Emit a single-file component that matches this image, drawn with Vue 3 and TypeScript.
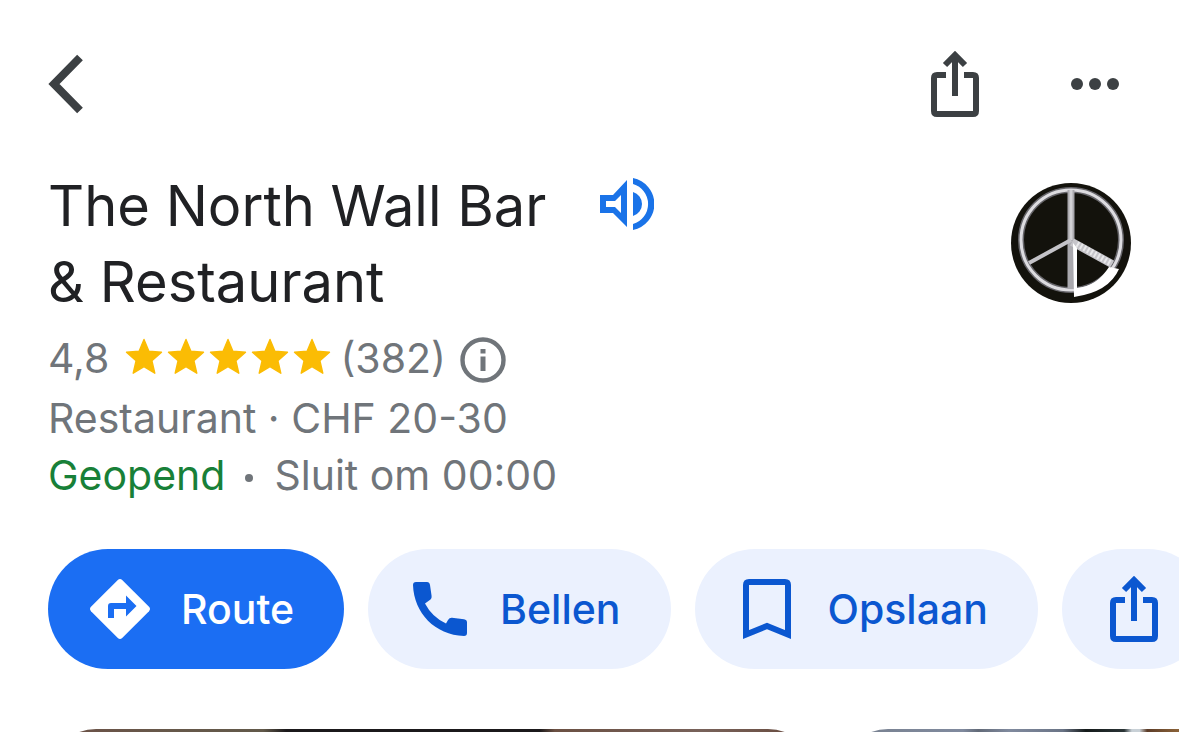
<script setup lang="ts">
const place = {
  nameLines: ['The North Wall Bar', '& Restaurant'],
  rating: '4,8',
  stars: 5,
  reviews: '(382)',
  category: 'Restaurant · CHF 20-30',
  status: 'Geopend',
  closing: 'Sluit om 00:00',
}

const photos: string[] = ['interior', 'terrace']
</script>

<template>
  <main class="place">
    <header class="toolbar">
      <button class="icon-button back" type="button" aria-label="Terug">
        <svg width="36" height="60" viewBox="0 0 36 60">
          <path d="M32 3.500 6 30l26 26.500" fill="none" stroke="currentColor" stroke-width="8" />
        </svg>
      </button>
      <div class="toolbar-end">
        <button class="icon-button" type="button" aria-label="Delen">
          <svg width="48" height="66" viewBox="0 0 48 66">
            <path d="M15 24H6q-3 0-3 3v33q0 3 3 3h36q3 0 3-3V27q0-3-3-3h-9M24 45V5M14 14 24 4l10 10" fill="none" stroke="currentColor" stroke-width="6" />
          </svg>
        </button>
        <button class="icon-button" type="button" aria-label="Meer">
          <svg width="48" height="12" viewBox="0 0 48 12" fill="currentColor">
            <circle cx="6" cy="6" r="6" />
            <circle cx="24" cy="6" r="6" />
            <circle cx="42" cy="6" r="6" />
          </svg>
        </button>
      </div>
    </header>

    <section class="summary">
      <div class="details">
        <div class="heading">
          <h1 class="name">
            <span v-for="line in place.nameLines" :key="line" class="name-line">{{ line }}</span>
          </h1>
          <button class="icon-button speak" type="button" aria-label="Uitspraak beluisteren">
            <svg width="54" height="52" viewBox="0 0 54 52">
              <path fill="currentColor" fill-rule="evenodd" d="M0 17h13L27 2v47L13 35H0zM6 23v6h9l6 6V17l-6 6z" />
              <path fill="currentColor" d="M33 14a12.5 12.5 0 0 1 0 24zM33 0a26.5 26.5 0 0 1 0 52v-6a20.8 20.8 0 0 0 0-40z" />
            </svg>
          </button>
        </div>

        <div class="row rating">
          <span>{{ place.rating }}</span>
          <span class="stars" role="img" aria-label="4,8 van 5 sterren">
            <svg v-for="n in place.stars" :key="n" width="42" height="42" viewBox="0 0 42 42">
              <path d="M21 2.500l4.900 11.800 12.600 1-9.600 8.400 2.900 12.500L21 29.600l-10.800 6.600 2.900-12.500-9.600-8.400 12.600-1z" fill="currentColor" stroke="currentColor" stroke-width="1.4" stroke-linejoin="round" />
            </svg>
          </span>
          <span class="reviews">{{ place.reviews }}</span>
          <button class="icon-button info" type="button" aria-label="Info over reviews">
            <svg width="46" height="50" viewBox="0 0 46 50">
              <circle cx="23" cy="27" r="20.500" fill="none" stroke="currentColor" stroke-width="4.400" />
              <path d="M20.500 16h5v4.500h-5zM20.500 23.500h5V38h-5z" fill="currentColor" />
            </svg>
          </button>
        </div>
        <div class="row">{{ place.category }}</div>
        <div class="row hours">
          <span class="open">{{ place.status }}</span>
          <span class="dot"></span>
          <span>{{ place.closing }}</span>
        </div>
      </div>

      <svg class="logo" viewBox="0 0 120 120" role="img" aria-label="Logo">
        <circle cx="60" cy="60" r="60" fill="#13120c" />
        <g fill="none">
          <circle cx="60" cy="57" r="50" stroke="#66656a" stroke-width="6" />
          <circle cx="60" cy="57" r="50" stroke="#dddce0" stroke-width="3" />
          <path d="M60 7v99" stroke="#aaa9ae" stroke-width="7" />
          <path d="M60 7v50" stroke="#d2d1d5" stroke-width="3" />
          <path d="M60 57 18 80" stroke="#c4c3c8" stroke-width="4" />
          <path d="M61 59l40 22" stroke="#c6c5ca" stroke-width="8" />
          <path d="M66 61l35 20" stroke="#e8e8ea" stroke-width="6" stroke-dasharray="2 2" />
        </g>
        <path d="M62 60l4 5v40q20-2 32-21l10 2q-10 23-45 28z" fill="#fff" />
      </svg>
    </section>

    <nav class="actions" aria-label="Acties">
      <button class="chip primary" type="button">
        <svg width="60" height="60" viewBox="0 0 60 60">
          <path d="M27.800 1q2.200-2 4.400 0L59 27.800q2 2.200 0 4.400L32.200 59q-2.200 2-4.400 0L1 32.200q-2-2.200 0-4.400z" fill="#fff" />
          <path d="M18 39V27q0-3 3-3h15v-7.500L46.500 27 36 37.500V30H24v9z" fill="#1b6ef3" />
        </svg>
        <span>Route</span>
      </button>
      <button class="chip call" type="button">
        <svg width="54" height="54" viewBox="0 0 54 54">
          <path d="M3 0h11q2.500 0 3 3l1.600 11q.3 2-1.100 3.500L12 21.500Q19 35 33 41.500l2-3.500q1.500-2.400 4-2.200l12 1.400q3 .6 3 3.300V51q0 3-3 3C22 53 1 31 0 3q0-3 3-3z" fill="currentColor" />
        </svg>
        <span>Bellen</span>
      </button>
      <button class="chip save" type="button">
        <svg width="48" height="60" viewBox="0 0 48 60">
          <path d="M3 55.500V6q0-3 3-3h36q3 0 3 3v49.500L24 47z" fill="none" stroke="currentColor" stroke-width="6" />
        </svg>
        <span>Opslaan</span>
      </button>
      <button class="chip share" type="button" aria-label="Delen">
        <svg width="48" height="66" viewBox="0 0 48 66">
          <path d="M15 24H6q-3 0-3 3v33q0 3 3 3h36q3 0 3-3V27q0-3-3-3h-9M24 45V5M14 14 24 4l10 10" fill="none" stroke="currentColor" stroke-width="6" />
        </svg>
      </button>
    </nav>

    <section class="gallery" aria-label="Foto's">
      <div v-for="photo in photos" :key="photo" class="photo" :class="photo"></div>
    </section>
  </main>
</template>

<style>
body {
  margin: 0;
  background: #fff;
}
</style>

<style scoped>
.place {
  display: flex;
  flex-direction: column;
  height: 100vh;
  overflow: hidden;
  background: #fff;
  color: #70757a;
  font-family: Inter, "Liberation Sans", sans-serif;
}

.place svg {
  display: block;
  flex: none;
}

.icon-button {
  display: flex;
  align-items: center;
  justify-content: center;
  flex: none;
  padding: 0;
  border: 0;
  background: none;
  color: #3c4043;
}

.toolbar {
  display: flex;
  align-items: center;
  justify-content: space-between;
  flex: none;
  height: 168px;
  padding: 0 48px;
}

.toolbar-end {
  display: flex;
  gap: 68px;
}

.toolbar-end .icon-button {
  width: 72px;
  height: 72px;
}

.summary {
  display: flex;
  align-items: flex-start;
  justify-content: space-between;
  flex: none;
  padding: 0 48px;
}

.heading {
  display: flex;
  align-items: flex-start;
  gap: 54px;
  margin-bottom: 8px;
}

.name {
  margin: 0;
  color: #202124;
  font-size: 56px;
  font-weight: 400;
  line-height: 76px;
}

.name-line {
  display: block;
  white-space: nowrap;
}

.speak {
  margin-top: 10px;
  color: #1a73e8;
}

.row {
  display: flex;
  align-items: center;
  height: 60px;
  font-size: 41px;
  line-height: 60px;
  white-space: nowrap;
}

.stars {
  display: flex;
  margin: 0 7px 0 14px;
  color: #fbbc04;
}

.info {
  margin-left: 14px;
  color: #70757a;
}

.hours {
  height: 54px;
}

.open {
  color: #188038;
}

.dot {
  width: 8px;
  height: 8px;
  margin: 6px 21px 0 20px;
  border-radius: 50%;
  background: #70757a;
}

.logo {
  width: 120px;
  height: 120px;
  margin-top: 15px;
}

.actions {
  display: flex;
  flex: none;
  gap: 24px;
  margin-top: 47px;
  padding-left: 48px;
  overflow: hidden;
}

.chip {
  display: flex;
  align-items: center;
  flex: none;
  height: 120px;
  padding: 0 50px 0 48px;
  border: 0;
  border-radius: 60px;
  background: #ebf1fe;
  color: #0b57d0;
  font-family: inherit;
  font-size: 41px;
  font-weight: 500;
}

.primary {
  gap: 31px;
  padding-left: 42px;
  background: #1b6ef3;
  color: #fff;
}

.call {
  gap: 33px;
  padding-left: 45px;
}

.save {
  gap: 37px;
}

.gallery {
  display: flex;
  flex: none;
  gap: 24px;
  margin-top: 60px;
  padding-left: 48px;
}

.photo {
  flex: none;
  width: 768px;
  height: 480px;
  border-radius: 48px;
}

.interior {
  background: linear-gradient(90deg, #6d5147 0, #66584a 16%, #62594a 28%, #1b191b 31%, #1b191b 64%, #6b5043 66%, #78625a 85%, #66483b 100%);
}

.terrace {
  background: linear-gradient(90deg, #77808e 0, #808a9e 16%, #626a78 18%, #808a9e 22%, #6a7486 29%, #141a1a 32%, #2a3436 37%, #c8d0d6 38%, #c8d0d6 39%, #5c3c28 40%, #8a6238 44%);
}
</style>
